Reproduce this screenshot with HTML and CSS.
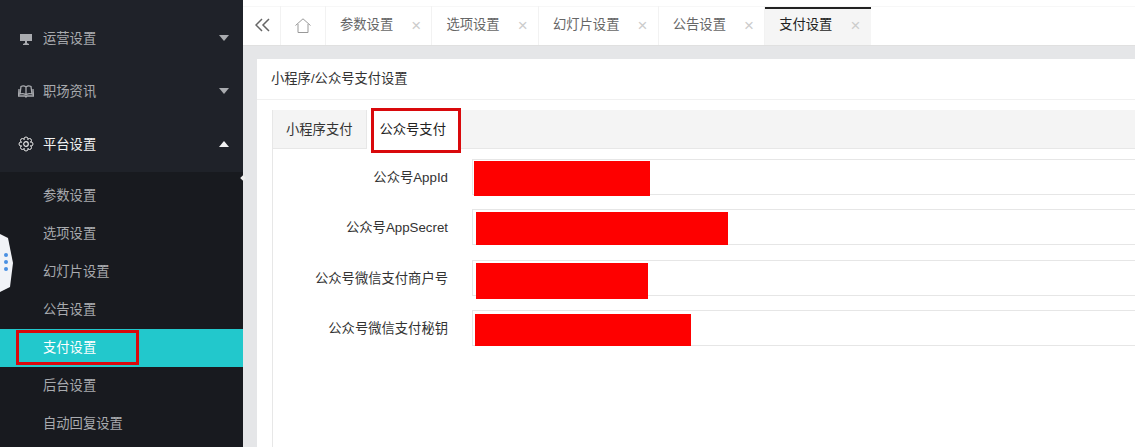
FILE: index.html
```html
<!DOCTYPE html>
<html lang="zh-CN">
<head>
    <meta charset="UTF-8">
    <title>支付设置</title>
    <link rel="stylesheet" href="styles.css">
</head>
<body>
    <aside class="sidebar">
        <div class="menu-item">
            <svg class="menu-icon" viewBox="0 0 16 16"><path d="M2 4h12v7H9v2l2 1v1H5v-1l2-1v-2H2z" fill="#a9abaf"/></svg>
            <span>运营设置</span>
            <i class="caret"></i>
        </div>
        <div class="menu-item">
            <svg class="menu-icon" viewBox="0 0 16 16"><path d="M8 4C6.500 2.800 4.500 2.800 3 3.500L2 11c2-.6 4-.4 6 .8 2-1.200 4-1.400 6-.8l-1-7.500C11.500 2.800 9.500 2.800 8 4zM8 4v7.800M1 6l-.5 7H7l1 1 1-1h6.500L15 6" fill="none" stroke="#a9abaf" stroke-width="1.300"/></svg>
            <span>职场资讯</span>
            <i class="caret"></i>
        </div>
        <div class="menu-item open">
            <svg class="menu-icon" viewBox="0 0 16 16">
                <g fill="#1f2229" stroke="#e6e6e6">
                    <circle cx="8" cy="3" r="2"/>
                    <circle cx="11.500" cy="4.500" r="2"/>
                    <circle cx="13" cy="8" r="2"/>
                    <circle cx="11.500" cy="11.500" r="2"/>
                    <circle cx="8" cy="13" r="2"/>
                    <circle cx="4.500" cy="11.500" r="2"/>
                    <circle cx="3" cy="8" r="2"/>
                    <circle cx="4.500" cy="4.500" r="2"/>
                </g>
                <circle cx="8" cy="8" r="4.500" fill="#1f2229"/>
                <circle cx="8" cy="8" r="2.300" fill="none" stroke="#e6e6e6" stroke-width="1.200"/>
            </svg>
            <span>平台设置</span>
            <i class="caret"></i>
        </div>
        <ul class="submenu">
            <li>参数设置</li>
            <li>选项设置</li>
            <li>幻灯片设置</li>
            <li>公告设置</li>
            <li class="active"><span class="mark mark-side"></span>支付设置</li>
            <li>后台设置</li>
            <li>自动回复设置</li>
        </ul>
        <svg class="float-handle" viewBox="0 0 13 58">
            <path d="M0 0l8 4 5 25-3 24-10 5z" fill="#f1f3f7"/>
            <circle cx="6" cy="21" r="2" fill="#4a90e2"/>
            <circle cx="6" cy="28" r="2" fill="#4a90e2"/>
            <circle cx="6" cy="35" r="2" fill="#4a90e2"/>
        </svg>
        <i class="collapse-dot"></i>
    </aside>

    <main class="main">
        <nav class="topbar">
            <div class="tool-btn collapse-btn">
                <svg width="15" height="14" viewBox="0 0 15 14"><path d="M7 1L1 7l6 6M14 1L8 7l6 6" fill="none" stroke="#666" stroke-width="1.500"/></svg>
            </div>
            <div class="tool-btn home-btn">
                <svg width="16" height="15" viewBox="0 0 16 15"><path d="M.5 7.500L8 .8l7.500 6.700M3 6v8.500h10V6" fill="none" stroke="#999" stroke-width="1"/></svg>
            </div>
            <div class="page-tab"><span>参数设置</span><i class="close">×</i></div>
            <div class="page-tab"><span>选项设置</span><i class="close">×</i></div>
            <div class="page-tab"><span>幻灯片设置</span><i class="close">×</i></div>
            <div class="page-tab"><span>公告设置</span><i class="close">×</i></div>
            <div class="page-tab current"><span>支付设置</span><i class="close">×</i></div>
        </nav>

        <section class="panel">
            <div class="panel-title">小程序/公众号支付设置</div>
            <div class="tabs">
                <div class="tabs-head">
                    <div class="tab">小程序支付</div>
                    <div class="tab selected">公众号支付<span class="mark mark-tab"></span></div>
                </div>
                <form class="form">
                    <label class="form-label">公众号AppId</label>
                    <div class="input"><span class="redact redact-1"></span></div>
                    <label class="form-label">公众号AppSecret</label>
                    <div class="input"><span class="redact redact-2"></span></div>
                    <label class="form-label">公众号微信支付商户号</label>
                    <div class="input"><span class="redact redact-3"></span></div>
                    <label class="form-label">公众号微信支付秘钥</label>
                    <div class="input"><span class="redact redact-4"></span></div>
                </form>
            </div>
        </section>
    </main>
</body>
</html>
```

FILE: styles.css
```css
* {
    margin: 0;
    padding: 0;
    box-sizing: border-box;
}

html, body {
    height: 100%;
    overflow: hidden;
}

body {
    display: flex;
    font-family: "Liberation Sans", "Noto Sans CJK SC", sans-serif;
    font-size: 13.3px;
    color: #333;
    background-color: #e5e6e8;
}

/* sidebar */
.sidebar {
    position: relative;
    display: flex;
    flex-direction: column;
    width: 243px;
    flex-shrink: 0;
    padding-top: 13px;
    background-color: #1f2229;
}

.menu-item {
    display: flex;
    flex-shrink: 0;
    align-items: center;
    height: 53px;
    padding: 0 14px 4px 18px;
    color: #a9abaf;
}

.menu-item.open {
    color: #f2f2f2;
}

.menu-icon {
    width: 16px;
    height: 16px;
    margin-right: 9px;
}

.menu-item span {
    flex: 1;
    margin-bottom: 1px;
}

.caret {
    width: 0;
    height: 0;
    border-left: 5.500px solid transparent;
    border-right: 5.500px solid transparent;
    border-top: 6px solid #a9abaf;
}

.menu-item.open .caret {
    border-top: none;
    border-bottom: 6px solid #f2f2f2;
}

.submenu {
    flex: 1;
    list-style: none;
    padding-top: 5px;
    background-color: #181a1f;
    color: #a9abaf;
}

.submenu li {
    position: relative;
    height: 38px;
    line-height: 38px;
    padding-left: 43px;
}

.submenu li.active {
    background-color: #22c8cc;
    color: #fff;
}

.float-handle {
    position: absolute;
    left: 0;
    top: 234px;
    width: 13px;
    height: 58px;
}

.collapse-dot {
    position: absolute;
    left: 241px;
    top: 176px;
    width: 4px;
    height: 4px;
    background-color: #eee;
    transform: rotate(45deg);
}

/* red marks from the screenshot */
.mark {
    position: absolute;
    border: 3px solid #d9090c;
}

.mark-side {
    left: 16px;
    top: 1px;
    width: 123px;
    height: 35px;
}

.mark-tab {
    left: 4px;
    top: -2px;
    width: 90px;
    height: 45px;
}

.redact {
    position: absolute;
    background-color: #fe0000;
}

.redact-1 { left: 1px; top: 1px; width: 176px; height: 35px; }
.redact-2 { left: 3px; top: 2px; width: 252px; height: 33px; }
.redact-3 { left: 3px; top: 2px; width: 172px; height: 36px; }
.redact-4 { left: 2px; top: 3px; width: 216px; height: 32px; }

/* main column */
.main {
    display: flex;
    flex-direction: column;
    flex: 1;
    min-width: 0;
}

.topbar {
    display: flex;
    flex-shrink: 0;
    height: 46px;
    padding-top: 6px;
    background: linear-gradient(#fff 6px, #f7f7f7 6px, #f7f7f7 7px, #fff 7px);
    border-bottom: 1px solid #e0e0e0;
    color: #666;
}

.tool-btn {
    display: flex;
    align-items: center;
    justify-content: center;
    padding-bottom: 1px;
    border-right: 1px solid #f2f2f2;
}

.collapse-btn { width: 38px; padding-left: 2px; }
.home-btn { width: 45px; }

.page-tab {
    display: flex;
    align-items: center;
    padding: 0 10.300px 4px 14px;
    border-right: 1px solid #f2f2f2;
}

.page-tab.current {
    margin-top: 1px;
    padding-bottom: 7px;
    background-color: #f5f5f5;
    border-top: 2px solid #222;
    border-right: none;
    color: #222;
}

.close {
    width: 10px;
    margin: 5px 0 0 18px;
    font-style: normal;
    font-size: 17px;
    line-height: 16px;
    text-align: center;
    color: #ccc;
}

.panel {
    display: flex;
    flex-direction: column;
    flex: 1;
    min-height: 0;
    margin: 13px 0 0 14px;
    background-color: #fff;
}

.panel-title {
    height: 41px;
    padding-left: 14px;
    line-height: 40px;
    border-bottom: 1px solid #f0f0f0;
}

.tabs {
    flex: 1;
    margin: 10px 0 0 15px;
    border-left: 1px solid #e7e7e7;
}

.tabs-head {
    display: flex;
    height: 39px;
    background-color: #f4f4f4;
    border-bottom: 1px solid #e7e7e7;
}

.tab {
    position: relative;
    height: 38px;
    padding: 0 14px 0 13px;
    line-height: 40px;
}

.tab.selected {
    height: 39px;
    padding-left: 12px;
    padding-right: 15px;
    background-color: #fff;
    border-left: 1px solid #e7e7e7;
    color: #222;
}

.form {
    display: grid;
    grid-template-columns: 175px 1fr;
    column-gap: 24px;
    row-gap: 14.300px;
    padding-top: 10px;
}

.form-label {
    height: 36px;
    line-height: 38px;
    text-align: right;
}

.input {
    position: relative;
    height: 36px;
    border: 1px solid #e6e6e6;
    border-right: none;
}
```
